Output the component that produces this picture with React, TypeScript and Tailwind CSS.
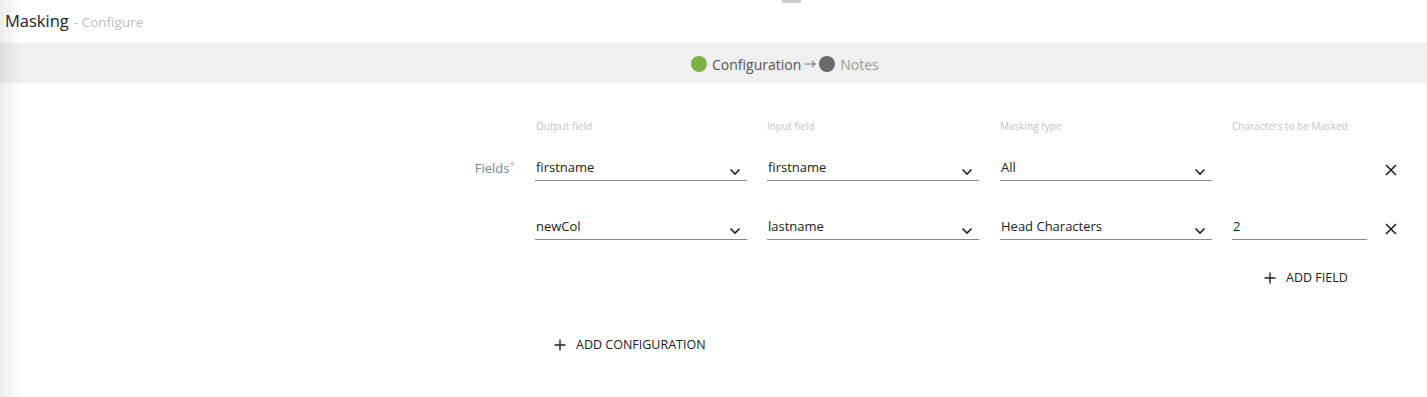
import React from "react";

const font = { fontFamily: '"Open Sans", "Liberation Sans", sans-serif' };

function Chevron() {
  return (
    <svg width="12" height="8" viewBox="0 0 12 8" className="mt-[4px]">
      <path d="M1.5 1.5 L6 6 L10.5 1.5" fill="none" stroke="#222" strokeWidth="1.6" />
    </svg>
  );
}

function Cross() {
  return (
    <svg width="12" height="12" viewBox="0 0 12 12">
      <path d="M1 1 L11 11 M11 1 L1 11" fill="none" stroke="#222" strokeWidth="1.6" />
    </svg>
  );
}

function Plus() {
  return (
    <svg width="12" height="12" viewBox="0 0 12 12">
      <path d="M6 0.5 V11.5 M0.5 6 H11.5" fill="none" stroke="#222" strokeWidth="1.4" />
    </svg>
  );
}

function Arrow() {
  return (
    <svg width="12" height="8" viewBox="0 0 12 8" className="ml-[3px]">
      <path d="M0.5 4 H11 M8 1.2 L11 4 L8 6.8" fill="none" stroke="#777" strokeWidth="1.1" />
    </svg>
  );
}

function Select({ value }: { value: string }) {
  return (
    <div className="w-[212px] h-[30px] border-b border-[#8a8a8a] flex items-end justify-between pb-[4px] pl-[1px] pr-[6px]">
      <span className="text-[13px] leading-[18px] text-[#222]">{value}</span>
      <Chevron />
    </div>
  );
}

function TextInput({ value }: { value: string }) {
  return (
    <div className="w-[135px] h-[30px] border-b border-[#8a8a8a] flex items-end pb-[4px] pl-[1px]">
      <span className="text-[13px] leading-[18px] text-[#222]">{value}</span>
    </div>
  );
}

export default function App() {
  return (
    <div className="relative w-full h-[397px] bg-white overflow-hidden" style={font}>
      <div className="absolute left-[782px] top-0 w-[19px] h-[3px] bg-[#cccccc]" />
      <div className="h-[43px] flex items-center pl-[5px]">
        <span className="text-[16.5px] text-[#222]">Masking</span>
        <span className="text-[13.5px] text-[#bdbdbd] ml-[5px] mt-[1px]">- Configure</span>
      </div>
      <div className="h-[40px] bg-[#f0f0f0] flex items-center pl-[691px] pt-[2px]">
        <div className="flex items-center text-[14px]">
          <span className="w-[16px] h-[16px] rounded-full bg-[#7cb342]" />
          <span className="ml-[5px] text-[#555]">Configuration</span>
          <Arrow />
          <span className="ml-[3px] w-[16px] h-[16px] rounded-full bg-[#6b6b6b]" />
          <span className="ml-[5px] text-[#999]">Notes</span>
        </div>
      </div>

      <div className="pt-[37px]">
        <div className="flex h-[13px] items-center text-[10px] text-[#c4c4c4]">
          <div className="w-[536px]" />
          <div className="w-[231px]">Output field</div>
          <div className="w-[233px]">Input field</div>
          <div className="w-[232px]">Masking type</div>
          <div>Characters to be Masked</div>
        </div>

        <div className="flex items-end mt-[18px]">
          <div className="w-[535px] flex justify-end pr-[20px] pb-[4px]">
            <span className="text-[13px] leading-[18px] text-[#7a8796]">Fields</span>
            <span className="text-[10px] leading-[12px] text-[#f2a3a3]">*</span>
          </div>
          <Select value="firstname" />
          <div className="w-[20px]" />
          <Select value="firstname" />
          <div className="w-[21px]" />
          <Select value="All" />
          <div className="w-[20px]" />
          <div className="w-[135px]" />
          <div className="w-[18px]" />
          <div className="pb-[5px]">
            <Cross />
          </div>
        </div>

        <div className="flex items-end mt-[29px]">
          <div className="w-[535px]" />
          <Select value="newCol" />
          <div className="w-[20px]" />
          <Select value="lastname" />
          <div className="w-[21px]" />
          <Select value="Head Characters" />
          <div className="w-[20px]" />
          <TextInput value="2" />
          <div className="w-[18px]" />
          <div className="pb-[5px]">
            <Cross />
          </div>
        </div>

        <div className="flex items-center mt-[25px] pl-[1264px] h-[26px]">
          <Plus />
          <span className="ml-[10px] text-[12.5px] text-[#222]">ADD FIELD</span>
        </div>

        <div className="flex items-center mt-[41px] pl-[554px] h-[26px]">
          <Plus />
          <span className="ml-[10px] text-[12.5px] text-[#222]">ADD CONFIGURATION</span>
        </div>
      </div>

      <div
        className="absolute left-0 top-0 bottom-0 w-[22px] pointer-events-none"
        style={{ background: "linear-gradient(to right, rgba(0,0,0,0.07), rgba(0,0,0,0))" }}
      />
    </div>
  );
}
